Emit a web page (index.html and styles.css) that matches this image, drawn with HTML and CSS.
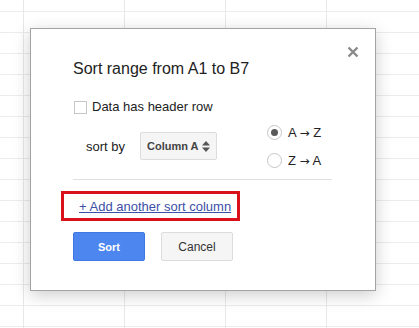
FILE: index.html
```html
<!DOCTYPE html>
<html lang="en">
<head>
  <meta charset="UTF-8">
  <title>Sort range</title>
  <link rel="stylesheet" href="styles.css">
</head>
<body>
  <div class="sheet-grid"></div>

  <!-- диалог сортировки -->
  <div class="sort-dialog">
    <span class="sort-dialog__close">
      <svg width="12" height="12" viewBox="0 0 12 12">
        <path d="M1.5 1.5 L10.5 10.5 M10.5 1.5 L1.5 10.5" stroke="#8a8a8a" stroke-width="2.4" fill="none"/>
      </svg>
    </span>

    <h1 class="sort-dialog__title">Sort range from A1 to B7</h1>

    <label class="sort-dialog__header">
      <span class="checkbox"></span>
      Data has header row
    </label>

    <div class="sort-row">
      <span class="sort-row__label">sort by</span>
      <div class="sort-row__select">
        Column A
        <svg class="sort-row__arrows" width="8" height="11" viewBox="0 0 8 11">
          <polygon points="0,4.5 4,0 8,4.5" fill="#555"/>
          <polygon points="0,6.5 4,11 8,6.5" fill="#555"/>
        </svg>
      </div>
      <div class="sort-row__order">
        <div class="radio-item">
          <span class="radio checked"></span>
          <span class="radio-item__text">A <span class="arrow">→</span> Z</span>
        </div>
        <div class="radio-item">
          <span class="radio"></span>
          <span class="radio-item__text">Z <span class="arrow">→</span> A</span>
        </div>
      </div>
    </div>

    <div class="sort-dialog__divider"></div>

    <div class="highlight">
      <a class="add-link" href="#">+ Add another sort column</a>
    </div>

    <div class="sort-dialog__buttons">
      <button class="btn btn--blue">Sort</button>
      <button class="btn">Cancel</button>
    </div>
  </div>
</body>
</html>
```

FILE: styles.css
```css
* {
  box-sizing: border-box;
  font-family: "Liberation Sans", Arial, sans-serif;
}
body {
  margin: 0;
  width: 419px;
  height: 328px;
  position: relative;
  overflow: hidden;
  background: #fff;
}
.sheet-grid {
  height: 100%;
  background-image:
    linear-gradient(to right, #e8e8e8 1px, transparent 1px),
    linear-gradient(to bottom, #ececec 1px, transparent 1px);
  background-size: 101px 100%, 100% 21px;
  background-position: 23px 0, 0 11px;
}

/* диалог */
.sort-dialog {
  position: absolute;
  left: 30px;
  top: 28px;
  width: 346px;
  height: 263px;
  padding: 30px 43px 0 42px;
  background: #fff;
  border: 1px solid #a3a3a3;
  box-shadow: 0 4px 16px rgba(0, 0, 0, .2);
  color: #222;
}
.sort-dialog__close {
  position: absolute;
  top: 17px;
  right: 16px;
  width: 12px;
  height: 12px;
  display: flex;
}
.sort-dialog__title {
  margin: 0;
  font-size: 16px;
  line-height: 20px;
  font-weight: normal;
  color: #222;
}
.sort-dialog__header {
  display: flex;
  align-items: center;
  margin-top: 20px;
  font-size: 13px;
  line-height: 16px;
  color: #222;
}
.checkbox {
  width: 13px;
  height: 13px;
  margin: 0 5px 0 1px;
  border: 1px solid #c6c6c6;
  background: #fff;
}

.sort-row {
  display: flex;
  align-items: center;
  margin-top: 10px;
  font-size: 13px;
  white-space: nowrap;
}
.sort-row__label {
  margin-left: 13px;
  width: 54px;
  flex-shrink: 0;
}
.sort-row__select {
  display: flex;
  align-items: center;
  justify-content: space-between;
  flex-shrink: 0;
  width: 77px;
  height: 28px;
  padding: 0 6px 0 6px;
  background: #f5f5f5;
  border: 1px solid #dcdcdc;
  border-radius: 2px;
  font-size: 11px;
  font-weight: bold;
  color: #444;
}
.sort-row__order {
  display: flex;
  flex-direction: column;
  gap: 14px;
  margin-left: 50px;
}
.radio-item {
  display: flex;
  align-items: center;
  height: 14px;
  font-size: 13px;
  color: #222;
}
.radio-item .arrow {
  font-family: "DejaVu Sans", sans-serif;
  font-size: 12px;
}
.radio {
  width: 15px;
  height: 15px;
  margin-right: 6px;
  border: 1px solid #c6c6c6;
  border-radius: 50%;
  display: flex;
  align-items: center;
  justify-content: center;
}
.radio.checked::after {
  content: "";
  width: 7px;
  height: 7px;
  border-radius: 50%;
  background: #5a5a5a;
}

.sort-dialog__divider {
  margin-top: 12px;
  height: 1px;
  background: #e0e0e0;
}

/* красная рамка вокруг ссылки */
.highlight {
  display: inline-block;
  margin: 11px 0 0 -12px;
  padding: 0 6px 0 15px;
  border: 3px solid #d8111b;
  line-height: 23px;
}
.add-link {
  font-size: 13px;
  color: #3d4fa6;
  text-decoration: underline;
}

.sort-dialog__buttons {
  display: flex;
  gap: 16px;
  margin-top: 11px;
}
.btn {
  width: 72px;
  height: 29px;
  padding: 0;
  border: 1px solid #dcdcdc;
  border-radius: 2px;
  background: #f5f5f5;
  font-size: 12px;
  color: #333;
}
.btn--blue {
  background: #4d86ef;
  border-color: #3f78e2;
  color: #fff;
  font-size: 11px;
  font-weight: bold;
}
```
